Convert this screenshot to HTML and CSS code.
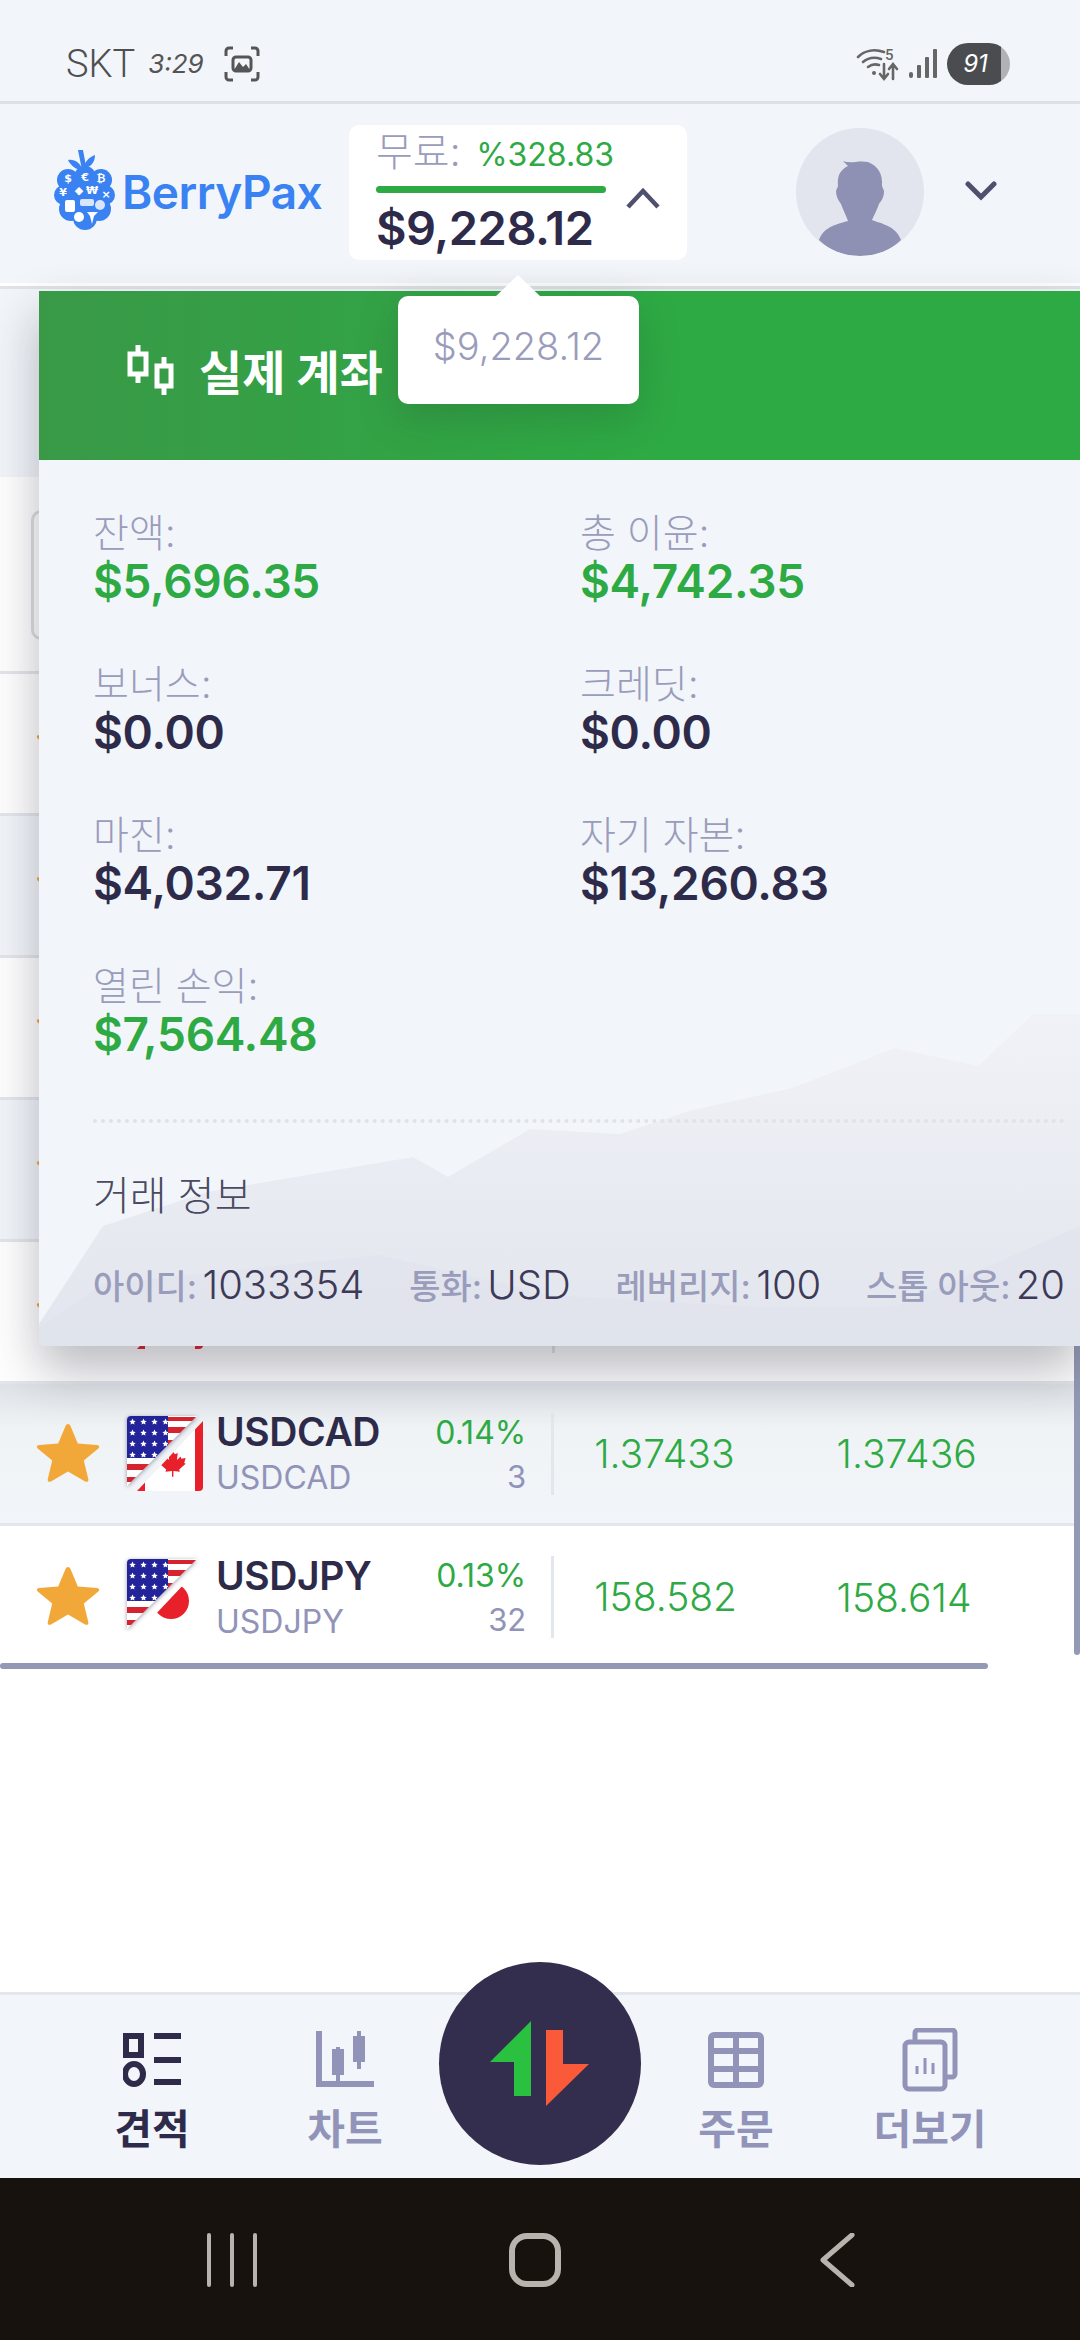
FILE: index.html
```html
<!DOCTYPE html>
<html lang="ko">
<head>
    <meta charset="UTF-8">
    <meta name="viewport" content="width=device-width, initial-scale=1.0">
    <title>BerryPax</title>
    <link rel="stylesheet" href="styles.css">
</head>
<body>

    <!-- Shared flag pieces -->
    <svg class="defs" width="0" height="0">
        <defs>
            <pattern id="stars" width="11" height="11" patternUnits="userSpaceOnUse">
                <rect width="11" height="11" fill="#23239a"/>
                <path d="M5.5 2.5l1 2.2 2.2.2-1.7 1.5.5 2.2-2-1.2-2 1.2.5-2.2-1.7-1.5 2.2-.2z" fill="#fff"/>
            </pattern>
            <clipPath id="upper"><path d="M4 0H70L0 70V4a4 4 0 0 1 4-4z"/></clipPath>
            <clipPath id="lower"><path d="M76 5V71a4 4 0 0 1-4 4H10z"/></clipPath>
            <linearGradient id="ridge" x1="0" y1="0" x2="0" y2="1">
                <stop offset="0" stop-color="#f0f2f7"/>
                <stop offset="1" stop-color="#e2e5ed"/>
            </linearGradient>
            <symbol id="flag-us" viewBox="0 0 76 76">
                <g clip-path="url(#upper)">
                    <rect width="76" height="76" fill="#fff"/>
                    <rect x="40" y="1" width="36" height="4" fill="#d5232f"/>
                    <rect x="40" y="11" width="36" height="6" fill="#d5232f"/>
                    <rect x="40" y="24" width="36" height="6" fill="#d5232f"/>
                    <rect x="0" y="48" width="36" height="6" fill="#d5232f"/>
                    <rect x="0" y="61" width="14" height="5" fill="#d5232f"/>
                    <rect width="41" height="42" fill="url(#stars)"/>
                </g>
            </symbol>
            <symbol id="flag-ca" viewBox="0 0 76 76">
                <g clip-path="url(#lower)">
                    <rect width="76" height="76" fill="#fff"/>
                    <rect x="68" width="8" height="76" fill="#e8202a"/>
                    <rect x="8" y="60" width="10" height="16" fill="#e8202a"/>
                    <g transform="translate(14 11) scale(.72)">
                        <path d="M43 31l4 7 4-2-1 10 5-5 1 3 6-1-2 7 2 1-9 8 1 3-9-1v8h-2v-8l-9 1 1-3-9-8 3-2-2-6 6 1 1-3 5 5-1-10 4 2z" fill="#e8202a"/>
                    </g>
                </g>
            </symbol>
            <symbol id="flag-jp" viewBox="0 0 76 76">
                <g clip-path="url(#lower)">
                    <circle cx="44" cy="42" r="18" fill="#e8202a"/>
                </g>
            </symbol>
            <symbol id="star" viewBox="0 0 64 64">
                <path d="M32 2c1.200 0 2 .8 2.500 2l7.300 17.500 19 1.500c2.500.2 3.300 2 1.500 3.600L47.800 38.400l4.500 18.700c.5 2.300-1.200 3.500-3.200 2.300L32 49.500 15 59.400c-2 1.200-3.700 0-3.200-2.300l4.400-18.700L1.700 26.600C0 25 .8 23.200 3.200 23l19-1.500L29.500 4c.5-1.200 1.300-2 2.500-2z" fill="#f2a838"/>
            </symbol>
        </defs>
    </svg>

    <!-- Status bar -->
    <div class="status-bar">
        <div class="status-left">
            <span class="carrier">SKT</span>
            <span class="clock">3:29</span>
            <svg class="shot-icon" viewBox="0 0 36 36" width="36" height="36" fill="none" stroke="#555" stroke-width="3">
                <path d="M9 2H5a3 3 0 0 0-3 3v5M27 2h4a3 3 0 0 1 3 3v5M9 34H5a3 3 0 0 1-3-3v-5M27 34h4a3 3 0 0 0 3-3v-5"/>
                <rect x="9" y="11" width="18" height="14" rx="3"/>
                <path d="M10 24l5-8 4 5 3-3 4 6z" fill="#555" stroke="none"/>
            </svg>
        </div>
        <div class="status-right">
            <svg viewBox="0 0 42 34" width="42" height="34" fill="none" stroke="#666" stroke-width="2.600" stroke-linecap="round">
                <path d="M1 10C8 3 18 2 27 5M6 15c6-5 12-5 18-3M11 20c4-3 8-3 11-2"/>
                <circle cx="17" cy="26" r="2" fill="#666" stroke="none"/>
                <path d="M27 17v14M23 27l4 5 4-5M36 32V18M32 22l4-5 4 5"/>
                <text x="28" y="13" class="wifi-five">5</text>
            </svg>
            <svg viewBox="0 0 28 30" width="28" height="30" fill="#666">
                <rect x="0" y="23" width="4" height="6" rx="2"/>
                <rect x="8" y="16" width="4" height="13" rx="1"/>
                <rect x="16" y="8" width="4" height="21" rx="1"/>
                <rect x="24" y="0" width="4" height="29" rx="1"/>
            </svg>
            <div class="battery"><span>91</span></div>
        </div>
    </div>

    <!-- Header -->
    <div class="top-header">
        <div class="logo">
            <svg viewBox="0 0 62 84" width="62" height="84">
                <g fill="#3a82f2">
                    <path d="M24 0l5 0 3 16-4 4z"/>
                    <path d="M14 10c7-1 12 3 15 10-7 0-12-4-15-10z"/>
                    <path d="M30 16c2-6 6-9 11-11 0 6-3 11-9 13z"/>
                    <circle cx="14" cy="30" r="11"/>
                    <circle cx="31" cy="27" r="11"/>
                    <circle cx="47" cy="30" r="11"/>
                    <circle cx="10" cy="45" r="10"/>
                    <circle cx="31" cy="43" r="14"/>
                    <circle cx="51" cy="45" r="10"/>
                    <circle cx="17" cy="59" r="12"/>
                    <circle cx="45" cy="59" r="12"/>
                    <circle cx="31" cy="68" r="12"/>
                </g>
                <g class="logo-marks">
                    <text x="14" y="32">$</text>
                    <text x="31" y="31">€</text>
                    <text x="47" y="32">₿</text>
                    <text x="38" y="44">₩</text>
                    <text x="25" y="44">◆</text>
                    <text x="9" y="46">¥</text>
                    <text x="52" y="48">×</text>
                </g>
                <rect x="11" y="50" width="10" height="12" rx="2" fill="#fff"/>
                <rect x="26" y="49" width="14" height="7" rx="2" fill="#fff" opacity=".8"/>
                <circle cx="46" cy="55" r="5" fill="#fff" opacity=".8"/>
                <circle cx="25" cy="67" r="5" fill="#fff"/>
                <path d="M33 62h11l-4 4-2 8-2-8z" fill="#fff"/>
            </svg>
            <span class="logo-text">BerryPax</span>
        </div>

        <div class="free-box">
            <div class="free-left">
                <div class="free-line">
                    <span class="free-label">무료:</span>
                    <span class="free-pct">%328.83</span>
                </div>
                <div class="free-bar"></div>
                <div class="free-amount">$9,228.12</div>
            </div>
            <svg class="free-chevron" viewBox="0 0 34 22" width="34" height="22" fill="none" stroke="#4f4f6e" stroke-width="4.500">
                <path d="M2 20L17 4l15 16"/>
            </svg>
        </div>

        <div class="avatar">
            <svg viewBox="0 0 128 128" width="128" height="128">
                <path d="M47 33C55 36 62 32 72 34C82 38 87 46 86 58L88 63C88 70 85 73 83 76C81 82 78 87 76 92C86 96 100 98 105 112C95 122 80 128 64 128C48 128 33 122 23 112C28 98 42 96 52 93C50 87 47 82 45 76C42 72 40 68 40 63L42 58C41 48 44 42 52 38Z" fill="#8e90b4"/>
            </svg>
        </div>

        <svg class="user-chevron" viewBox="0 0 32 20" width="32" height="20" fill="none" stroke="#4f4f6e" stroke-width="5" stroke-linecap="round">
            <path d="M3 3l13 13L29 3"/>
        </svg>
    </div>

    <!-- Contenido -->
    <div class="content">
        <div class="market-top"></div>
        <div class="market-filter"><div class="filter-box"></div></div>

        <div class="market-row">
            <svg class="star"><use href="#star"/></svg>
        </div>
        <div class="market-row alt">
            <svg class="star"><use href="#star"/></svg>
        </div>
        <div class="market-row">
            <svg class="star"><use href="#star"/></svg>
        </div>
        <div class="market-row alt">
            <svg class="star"><use href="#star"/></svg>
        </div>
        <div class="market-row">
            <svg class="star"><use href="#star"/></svg>
            <div class="flag">
                <svg><use href="#flag-ca"/></svg>
            </div>
            <div class="pair"></div>
            <div class="change"></div>
            <div class="quote bid"></div>
        </div>

        <div class="market-row alt shaded">
            <svg class="star"><use href="#star"/></svg>
            <div class="flag">
                <svg><use href="#flag-ca"/></svg>
                <svg class="flag-top"><use href="#flag-us"/></svg>
            </div>
            <div class="pair">
                <div class="pair-name">USDCAD</div>
                <div class="pair-sub">USDCAD</div>
            </div>
            <div class="change">
                <div class="change-pct">0.14%</div>
                <div class="change-num">3</div>
            </div>
            <div class="quote bid">1.37433</div>
            <div class="quote">1.37436</div>
        </div>

        <div class="market-row last">
            <svg class="star"><use href="#star"/></svg>
            <div class="flag">
                <svg><use href="#flag-jp"/></svg>
                <svg class="flag-top"><use href="#flag-us"/></svg>
            </div>
            <div class="pair">
                <div class="pair-name">USDJPY</div>
                <div class="pair-sub">USDJPY</div>
            </div>
            <div class="change">
                <div class="change-pct">0.13%</div>
                <div class="change-num">32</div>
            </div>
            <div class="quote bid">158.582</div>
            <div class="quote">158.614</div>
        </div>

        <div class="scroll-x"></div>
        <div class="scroll-y"></div>

        <!-- Panel de la cuenta -->
        <div class="account-panel">
            <svg class="mountains" viewBox="0 0 1041 400" width="1041" height="400">
                <path d="M0 400V378L64 280l104-34 206-35 35 20 82-48 90 5 69-23 103-23 103-40 83 18 55-52h47V400z" fill="url(#ridge)"/>
                <path d="M0 400V382l64-44 276-29 172 40 206 12 138 0 185-81V400z" fill="#dfe3eb" opacity=".6"/>
            </svg>
            <div class="panel-head">
                <svg viewBox="0 0 48 50" width="48" height="50" fill="none" stroke="#fff" stroke-width="5">
                    <path d="M11 0v8M11 30v8M37 12v8M37 42v8"/>
                    <rect x="3" y="9" width="16" height="20"/>
                    <rect x="30" y="21" width="14" height="20"/>
                </svg>
                <span class="panel-title">실제 계좌</span>
            </div>
            <div class="panel-body">
                <div class="fields">
                    <div class="field">
                        <div class="field-label">잔액:</div>
                        <div class="field-value green">$5,696.35</div>
                    </div>
                    <div class="field">
                        <div class="field-label">총 이윤:</div>
                        <div class="field-value green">$4,742.35</div>
                    </div>
                    <div class="field">
                        <div class="field-label">보너스:</div>
                        <div class="field-value">$0.00</div>
                    </div>
                    <div class="field">
                        <div class="field-label">크레딧:</div>
                        <div class="field-value">$0.00</div>
                    </div>
                    <div class="field">
                        <div class="field-label">마진:</div>
                        <div class="field-value">$4,032.71</div>
                    </div>
                    <div class="field">
                        <div class="field-label">자기 자본:</div>
                        <div class="field-value">$13,260.83</div>
                    </div>
                    <div class="field">
                        <div class="field-label">열린 손익:</div>
                        <div class="field-value green">$7,564.48</div>
                    </div>
                </div>
                <div class="dash-line"></div>
                <div class="trade-title">거래 정보</div>
                <div class="trade-info">
                    <span><b>아이디:</b> 1033354</span>
                    <span><b>통화:</b> USD</span>
                    <span><b>레버리지:</b> 100</span>
                    <span><b>스톱 아웃:</b> 20</span>
                </div>
            </div>
        </div>

        <!-- Tooltip -->
        <div class="tooltip">$9,228.12</div>
    </div>

    <!-- Navegación -->
    <div class="bottom-nav">
        <div class="nav-item active">
            <div class="nav-icon">
                <svg viewBox="0 0 58 54" width="58" height="54" fill="none" stroke="#2e2b4a" stroke-width="6">
                    <rect x="3" y="3" width="15" height="19"/>
                    <ellipse cx="11" cy="41" rx="9" ry="10"/>
                    <path d="M31 3h27M31 27h27M31 49h27"/>
                </svg>
            </div>
            <span>견적</span>
        </div>
        <div class="nav-item chart">
            <div class="nav-icon">
                <svg viewBox="0 0 58 58" width="58" height="58" fill="none" stroke="#9194b8" stroke-width="4">
                    <path d="M3 0v53h55" stroke-width="6"/>
                    <path d="M22 16v38M43 0v38"/>
                    <rect x="18" y="20" width="8" height="22" fill="#9194b8"/>
                    <rect x="39" y="7" width="8" height="22" fill="#9194b8"/>
                </svg>
            </div>
            <span>차트</span>
        </div>
        <div class="nav-item orders">
            <div class="nav-icon">
                <svg viewBox="0 0 56 56" width="56" height="56" fill="none" stroke="#9194b8" stroke-width="6">
                    <rect x="3" y="3" width="50" height="50" rx="3"/>
                    <path d="M3 19h50M3 37h50M28 3v50"/>
                </svg>
            </div>
            <span>주문</span>
        </div>
        <div class="nav-item more">
            <div class="nav-icon">
                <svg viewBox="0 0 56 64" width="56" height="64" fill="none" stroke="#9194b8" stroke-width="5">
                    <path d="M13 14V5a3 3 0 0 1 3-3h34a3 3 0 0 1 3 3v41a3 3 0 0 1-3 3h-6"/>
                    <rect x="3" y="14" width="40" height="47" rx="4"/>
                    <path d="M15 46v-8M23 46V30M31 46V35" stroke-width="3"/>
                </svg>
            </div>
            <span>더보기</span>
        </div>
        <div class="trade-btn">
            <svg viewBox="0 0 100 86" width="100" height="86">
                <path d="M41 0V75H24V41H0z" fill="#2ac140"/>
                <path d="M56 9H73V43H99L56 85z" fill="#fb5a3a"/>
            </svg>
        </div>
    </div>

    <!-- Barra del sistema -->
    <div class="system-bar">
        <svg viewBox="0 0 680 54" width="680" height="54" fill="none" stroke="#b8b3ad" stroke-linecap="round" stroke-linejoin="round">
            <path d="M9 2v50M32 2v50M55 2v50" stroke-width="4"/>
            <rect x="312" y="3" width="46" height="48" rx="15" stroke-width="6"/>
            <path d="M652 2L623 27l29 25" stroke-width="5"/>
        </svg>
    </div>

</body>
</html>
```

FILE: styles.css
```css
* {
    margin: 0;
    padding: 0;
    box-sizing: border-box;
}

html, body {
    width: 1080px;
    height: 2340px;
    overflow: hidden;
}

body {
    display: flex;
    flex-direction: column;
    background-color: #fff;
    font-family: 'Inter', 'Noto Sans CJK KR', sans-serif;
    color: #2e2b4a;
}

.defs {
    position: absolute;
}

/* Status bar */
.status-bar {
    height: 104px;
    flex-shrink: 0;
    display: flex;
    align-items: center;
    justify-content: space-between;
    padding: 26px 70px 0 66px;
    background-color: #f2f6fa;
    border-bottom: 3px solid #dde1e6;
}

.status-left, .status-right {
    display: flex;
    align-items: center;
}

.carrier {
    font-size: 38px;
    font-family: 'Roboto', sans-serif;
    font-weight: 300;
    color: #4f4f4f;
}

.clock {
    margin-left: 13px;
    font-size: 26px;
    font-style: italic;
    color: #555;
}

.shot-icon {
    margin-left: 20px;
}

.status-right svg {
    margin-right: 10px;
    overflow: visible;
}

.wifi-five {
    font: 500 15px 'Roboto', sans-serif;
    fill: #666;
    stroke: none;
}

.battery {
    width: 63px;
    height: 42px;
    border-radius: 21px;
    background: linear-gradient(90deg, #4a4c50 86%, #b0b2b5 86%);
    display: flex;
    align-items: center;
    justify-content: center;
    padding-right: 6px;
}

.battery span {
    color: #fff;
    font-size: 24px;
    font-style: italic;
}

/* Header */
.top-header {
    height: 185px;
    flex-shrink: 0;
    display: flex;
    align-items: center;
    padding: 0 0 6px 54px;
    background-color: #f2f6fa;
    border-bottom: 3px solid #dfe3e8;
    box-shadow: inset 0 -3px 0 #fff;
}

.logo {
    width: 295px;
    display: flex;
    align-items: center;
    gap: 6px;
}

.logo-text {
    font-size: 46px;
    font-weight: 600;
    color: #3a82f2;
    letter-spacing: -0.5px;
}

.logo-marks text {
    font: 700 11px 'DejaVu Sans', sans-serif;
    fill: #fff;
    text-anchor: middle;
}

.free-box {
    width: 338px;
    height: 135px;
    padding: 6px 27px 0 27px;
    display: flex;
    align-items: center;
    justify-content: space-between;
    background-color: #fff;
    border-radius: 10px;
}

.free-left {
    width: 230px;
}

.free-line {
    display: flex;
    align-items: baseline;
    justify-content: space-between;
    height: 44px;
    margin-top: -4px;
}

.free-label {
    font-size: 40px;
    line-height: 44px;
    font-weight: 300;
    color: #9a9cbc;
}

.free-pct {
    font-size: 32px;
    color: #2eaa44;
    margin-right: -8px;
}

.free-bar {
    height: 7px;
    margin-top: 12px;
    border-radius: 4px;
    background-color: #2eaa44;
}

.free-amount {
    margin-top: 7px;
    font-size: 47px;
    font-weight: 600;
    line-height: 56px;
    letter-spacing: -0.5px;
    white-space: nowrap;
}

.free-chevron {
    margin-top: 6px;
    flex-shrink: 0;
}

.avatar {
    width: 128px;
    height: 128px;
    margin-left: 109px;
    border-radius: 50%;
    overflow: hidden;
    background-color: #e2e5ee;
}

.user-chevron {
    margin: -2px 0 0 41px;
}

/* Lista de mercado */
.content {
    position: relative;
    height: 1703px;
    flex-shrink: 0;
    background-color: #fff;
}

.market-top {
    height: 188px;
    background-color: #f2f6fa;
}

.market-filter {
    height: 197px;
    padding: 33px 0 0 31px;
    background-color: #fff;
    border-bottom: 3px solid #e3e6ea;
}

.filter-box {
    width: 300px;
    height: 130px;
    border: 3px solid #dcdee2;
    border-radius: 10px;
}

.market-row {
    height: 142px;
    display: flex;
    align-items: center;
    padding-left: 36px;
    background-color: #fff;
    border-bottom: 3px solid #e3e6ea;
}

.market-row.alt {
    background-color: #f2f6fa;
}

.market-row.shaded {
    background: linear-gradient(180deg, #dfe2e6 0, #eff3f6 45px, #f2f6fa 100%);
}

.market-row.last {
    border-bottom: none;
}

.star {
    width: 64px;
    height: 64px;
    flex-shrink: 0;
}

.flag {
    position: relative;
    width: 76px;
    height: 76px;
    margin-left: 27px;
    flex-shrink: 0;
}

.flag svg {
    display: block;
    width: 76px;
    height: 76px;
}

.flag .flag-top {
    position: absolute;
    left: 0;
    top: 0;
    filter: drop-shadow(0 1px 2px rgba(30, 30, 60, 0.45));
}

.pair {
    width: 231px;
    margin-left: 13px;
}

.pair-name {
    font-size: 39px;
    font-weight: 600;
    line-height: 46px;
    letter-spacing: -0.4px;
}

.pair-sub {
    margin-top: 3px;
    font-size: 32px;
    line-height: 40px;
    color: #9194b8;
}

.change {
    width: 80px;
    height: 82px;
    text-align: right;
    white-space: nowrap;
}

.change-pct {
    font-size: 32px;
    line-height: 40px;
    color: #2eaa44;
    margin-left: -20px;
}

.change-num {
    margin-top: 6px;
    font-size: 31px;
    line-height: 36px;
    color: #9194b8;
}

.quote {
    width: 244px;
    font-size: 39px;
    font-weight: 300;
    color: #2eaa44;
}

.quote.bid {
    margin-left: 25px;
    padding-left: 40px;
    border-left: 3px solid #e3e6ea;
    height: 82px;
    line-height: 82px;
    width: 286px;
}

.scroll-x {
    position: absolute;
    left: 0;
    top: 1374px;
    width: 988px;
    height: 6px;
    border-radius: 3px;
    background-color: #9499b5;
}

.scroll-y {
    position: absolute;
    right: 0;
    top: 1050px;
    width: 6px;
    height: 316px;
    border-radius: 3px;
    background-color: #9499b5;
}

/* Panel de la cuenta */
.account-panel {
    position: absolute;
    left: 39px;
    right: 0;
    top: 2px;
    height: 1055px;
    overflow: hidden;
    background-color: #f2f6fa;
    border-bottom-left-radius: 6px;
    box-shadow: 0 24px 50px rgba(40, 40, 60, 0.32);
}

.mountains {
    position: absolute;
    left: 0;
    bottom: 0;
}

.panel-head {
    position: relative;
    height: 169px;
    display: flex;
    align-items: center;
    gap: 24px;
    padding: 0 0 12px 88px;
    background: linear-gradient(90deg, #399947 0, #2eaa44 60%);
}

.panel-title {
    font-size: 47px;
    font-weight: 700;
    color: #fff;
}

.panel-body {
    position: relative;
    padding: 53px 15px 0 54px;
}

.fields {
    display: grid;
    grid-template-columns: 487px 1fr;
    row-gap: 55px;
}

.field-label {
    font-size: 39px;
    font-weight: 300;
    line-height: 40px;
    color: #9a9cbc;
}

.field-value {
    font-size: 46px;
    font-weight: 600;
    line-height: 56px;
    letter-spacing: -0.3px;
}

.green {
    color: #2eaa44;
}

.dash-line {
    margin-top: 57px;
    border-top: 4px dotted #dfe2e8;
}

.trade-title {
    margin-top: 51px;
    font-size: 40px;
    line-height: 44px;
    font-weight: 300;
    color: #4a4a62;
}

.trade-info {
    margin-top: 45px;
    display: flex;
    justify-content: space-between;
    font-size: 40px;
    font-weight: 300;
    line-height: 44px;
    white-space: nowrap;
    word-spacing: -6px;
    color: #3c3a56;
}

.trade-info b {
    font-size: 34px;
    font-weight: 500;
    word-spacing: 0;
    color: #9a9cbc;
}

/* Tooltip */
.tooltip {
    position: absolute;
    left: 398px;
    top: 7px;
    width: 241px;
    height: 108px;
    padding-top: 27px;
    text-align: center;
    font-size: 38px;
    font-weight: 300;
    color: #9a9cbc;
    background-color: #fff;
    border-radius: 10px;
    box-shadow: 0 14px 40px rgba(30, 60, 40, 0.22);
}

.tooltip::before {
    content: "";
    position: absolute;
    left: 97px;
    top: -21px;
    border-left: 23px solid transparent;
    border-right: 23px solid transparent;
    border-bottom: 22px solid #fff;
}

/* Navegación */
.bottom-nav {
    position: relative;
    height: 186px;
    flex-shrink: 0;
    background-color: #f2f6fa;
    border-top: 3px solid #e4e7ec;
    display: flex;
    padding-top: 33px;
}

.nav-item {
    width: 200px;
    margin-left: 52px;
    display: flex;
    flex-direction: column;
    align-items: center;
    font-size: 41px;
    font-weight: 600;
    line-height: 44px;
    color: #9194b8;
}

.nav-icon {
    height: 64px;
    margin-bottom: 15px;
    display: flex;
    align-items: center;
}

.nav-item.active {
    color: #2e2b4a;
}

.nav-item.chart {
    margin-left: -7px;
}

.nav-item.orders {
    margin-left: 191px;
}

.nav-item.more {
    margin-left: -6px;
}

.trade-btn {
    position: absolute;
    left: 439px;
    top: -33px;
    width: 202px;
    height: 203px;
    border-radius: 50%;
    background-color: #342e4e;
    display: flex;
    align-items: center;
    justify-content: center;
}

/* Barra del sistema */
.system-bar {
    height: 162px;
    flex-shrink: 0;
    display: flex;
    justify-content: center;
    padding-top: 55px;
    background-color: #18120e;
}
```
